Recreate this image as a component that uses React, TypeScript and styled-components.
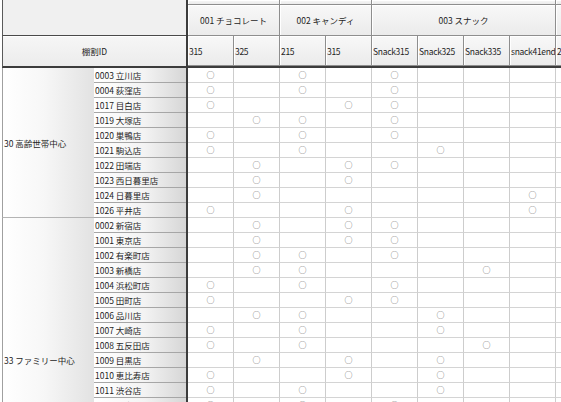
import styled, { createGlobalStyle } from "styled-components";

const COL_W = 46;
const ROW_H = 15;

const GlobalStyle = createGlobalStyle`
  html, body {
    margin: 0;
    padding: 0;
    background: #ffffff;
  }
  body {
    font-family: "Noto Sans CJK JP", "Noto Sans", sans-serif;
    font-size: 8.5px;
    color: #1e1e1e;
  }
`;

const Sheet = styled.div`
  display: flex;
  align-items: flex-start;
  width: 561px;
  height: 402px;
  overflow: hidden;
  padding-left: 2px;
  box-sizing: border-box;
  background: #ffffff;
`;

const FrozenPane = styled.div`
  flex: none;
  width: 184px;
  display: flex;
  flex-direction: column;
  border-right: 2px solid #3c3c3c;
`;

const CornerHeader = styled.div`
  flex: none;
  height: 36px;
  box-sizing: border-box;
  background: #f0f0f0;
  border-left: 1px solid #5a5a5a;
  border-bottom: 1px solid #4a4a4a;
`;

const IdHeader = styled.div`
  flex: none;
  height: 32px;
  box-sizing: border-box;
  display: flex;
  align-items: center;
  justify-content: center;
  background: linear-gradient(#f6f6f6, #ececec);
  border-left: 1px solid #5a5a5a;
  border-bottom: 2px solid #3c3c3c;
  box-shadow: inset 0 1px 0 #ffffff;
`;

const GroupBlock = styled.div`
  flex: none;
  display: flex;
`;

const GroupLabel = styled.div`
  width: 92px;
  flex: none;
  box-sizing: border-box;
  display: flex;
  align-items: center;
  padding-left: 1px;
  white-space: nowrap;
  background: linear-gradient(to right, #ffffff 0%, #f7f7f7 45%, #e2e2e2 100%);
  border-left: 1px solid #a0a0a0;
  border-bottom: 1px solid #b4b4b4;
`;

const StoreList = styled.div`
  width: 92px;
  flex: none;
  display: flex;
  flex-direction: column;
`;

const StoreCell = styled.div`
  flex: none;
  height: ${ROW_H}px;
  box-sizing: border-box;
  padding-left: 1px;
  line-height: 14px;
  white-space: nowrap;
  overflow: hidden;
  background: linear-gradient(to right, #ffffff 0%, #f3f3f3 55%, #d6d6d6 100%);
  border-bottom: 1px solid #a6a6a6;
`;

const ScrollPane = styled.div`
  flex: none;
  display: flex;
  flex-direction: column;
`;

const HeaderRow = styled.div<{ $height: number; $thick?: boolean }>`
  flex: none;
  display: flex;
  height: ${({ $height }) => $height}px;
  box-sizing: border-box;
  border-bottom: ${({ $thick }) => ($thick ? "2px solid #3c3c3c" : "none")};
`;

const HeaderCell = styled.div<{ $span: number; $align?: "center" | "left" }>`
  flex: none;
  width: ${({ $span }) => $span * COL_W}px;
  box-sizing: border-box;
  display: flex;
  align-items: center;
  justify-content: ${({ $align }) => ($align === "left" ? "flex-start" : "center")};
  padding-left: ${({ $align }) => ($align === "left" ? "1px" : "0")};
  letter-spacing: ${({ $align }) => ($align === "left" ? "-0.3px" : "0")};
  white-space: nowrap;
  overflow: hidden;
  background: linear-gradient(#f8f8f8, #ebebeb);
  border-right: 1px solid #8e8e8e;
  border-bottom: 1px solid #8e8e8e;
  box-shadow: inset 1px 1px 0 #ffffff;
`;

const DataRow = styled.div`
  flex: none;
  display: flex;
`;

const DataCell = styled.div`
  flex: none;
  width: ${COL_W}px;
  height: ${ROW_H}px;
  box-sizing: border-box;
  text-align: center;
  line-height: 14px;
  font-size: 8px;
  color: #555555;
  border-right: 1px solid #cdcdcd;
  border-bottom: 1px solid #d4d4d4;
`;

type Group = { code: string; label: string; span: number };

const topGroups: Group[] = [
  { code: "", label: "", span: 2 },
  { code: "", label: "", span: 2 },
  { code: "", label: "", span: 4 },
  { code: "", label: "", span: 3 },
];

const productGroups: Group[] = [
  { code: "001", label: "チョコレート", span: 2 },
  { code: "002", label: "キャンディ", span: 2 },
  { code: "003", label: "スナック", span: 4 },
  { code: "004", label: "ガム", span: 3 },
];

const columns = ["315", "325", "215", "315", "Snack315", "Snack325", "Snack335", "snack41end", "215", "325", "335"];

type Store = { name: string; marks: number[] };
type Area = { label: string; stores: Store[] };

const areas: Area[] = [
  {
    label: "30 高齢世帯中心",
    stores: [
      { name: "0003 立川店", marks: [1, 3, 5] },
      { name: "0004 荻窪店", marks: [1, 3, 5] },
      { name: "1017 目白店", marks: [1, 4, 5] },
      { name: "1019 大塚店", marks: [2, 3, 5] },
      { name: "1020 巣鴨店", marks: [1, 3, 5] },
      { name: "1021 駒込店", marks: [1, 3, 6] },
      { name: "1022 田端店", marks: [2, 4, 5] },
      { name: "1023 西日暮里店", marks: [2, 4] },
      { name: "1024 日暮里店", marks: [2, 8] },
      { name: "1026 平井店", marks: [1, 4, 8] },
    ],
  },
  {
    label: "33 ファミリー中心",
    stores: [
      { name: "0002 新宿店", marks: [2, 4, 5] },
      { name: "1001 東京店", marks: [2, 4, 5] },
      { name: "1002 有楽町店", marks: [2, 3, 5] },
      { name: "1003 新橋店", marks: [2, 3, 7] },
      { name: "1004 浜松町店", marks: [1, 3, 5] },
      { name: "1005 田町店", marks: [1, 4, 5] },
      { name: "1006 品川店", marks: [2, 3, 6] },
      { name: "1007 大崎店", marks: [1, 3, 6] },
      { name: "1008 五反田店", marks: [1, 3, 7] },
      { name: "1009 目黒店", marks: [2, 4, 6] },
      { name: "1010 恵比寿店", marks: [1, 4, 6] },
      { name: "1011 渋谷店", marks: [1, 3, 6] },
      { name: "1012 原宿店", marks: [1, 3, 5] },
      { name: "1013 代々木店", marks: [2, 4, 5] },
      { name: "1014 高田馬場店", marks: [1, 3, 6] },
      { name: "1015 池袋店", marks: [2, 3, 5] },
      { name: "1016 目白台店", marks: [1, 4, 7] },
      { name: "1018 板橋店", marks: [2, 3, 5] },
      { name: "1025 亀戸店", marks: [1, 4, 6] },
    ],
  },
];

const allStores = areas.flatMap((a) => a.stores);

export default function App() {
  return (
    <>
      <GlobalStyle />
      <Sheet>
        <FrozenPane>
          <CornerHeader />
          <IdHeader>棚割ID</IdHeader>
          {areas.map((area) => (
            <GroupBlock key={area.label}>
              <GroupLabel>{area.label}</GroupLabel>
              <StoreList>
                {area.stores.map((s) => (
                  <StoreCell key={s.name}>{s.name}</StoreCell>
                ))}
              </StoreList>
            </GroupBlock>
          ))}
        </FrozenPane>
        <ScrollPane>
          <HeaderRow $height={5}>
            {topGroups.map((g, i) => (
              <HeaderCell key={i} $span={g.span} />
            ))}
          </HeaderRow>
          <HeaderRow $height={31}>
            {productGroups.map((g) => (
              <HeaderCell key={g.code} $span={g.span}>
                {g.code} {g.label}
              </HeaderCell>
            ))}
          </HeaderRow>
          <HeaderRow $height={32} $thick>
            {columns.map((c, i) => (
              <HeaderCell key={i} $span={1} $align="left">
                {c}
              </HeaderCell>
            ))}
          </HeaderRow>
          {allStores.map((s) => (
            <DataRow key={s.name}>
              {columns.map((_, i) => (
                <DataCell key={i}>{s.marks.includes(i + 1) ? "○" : ""}</DataCell>
              ))}
            </DataRow>
          ))}
        </ScrollPane>
      </Sheet>
    </>
  );
}
